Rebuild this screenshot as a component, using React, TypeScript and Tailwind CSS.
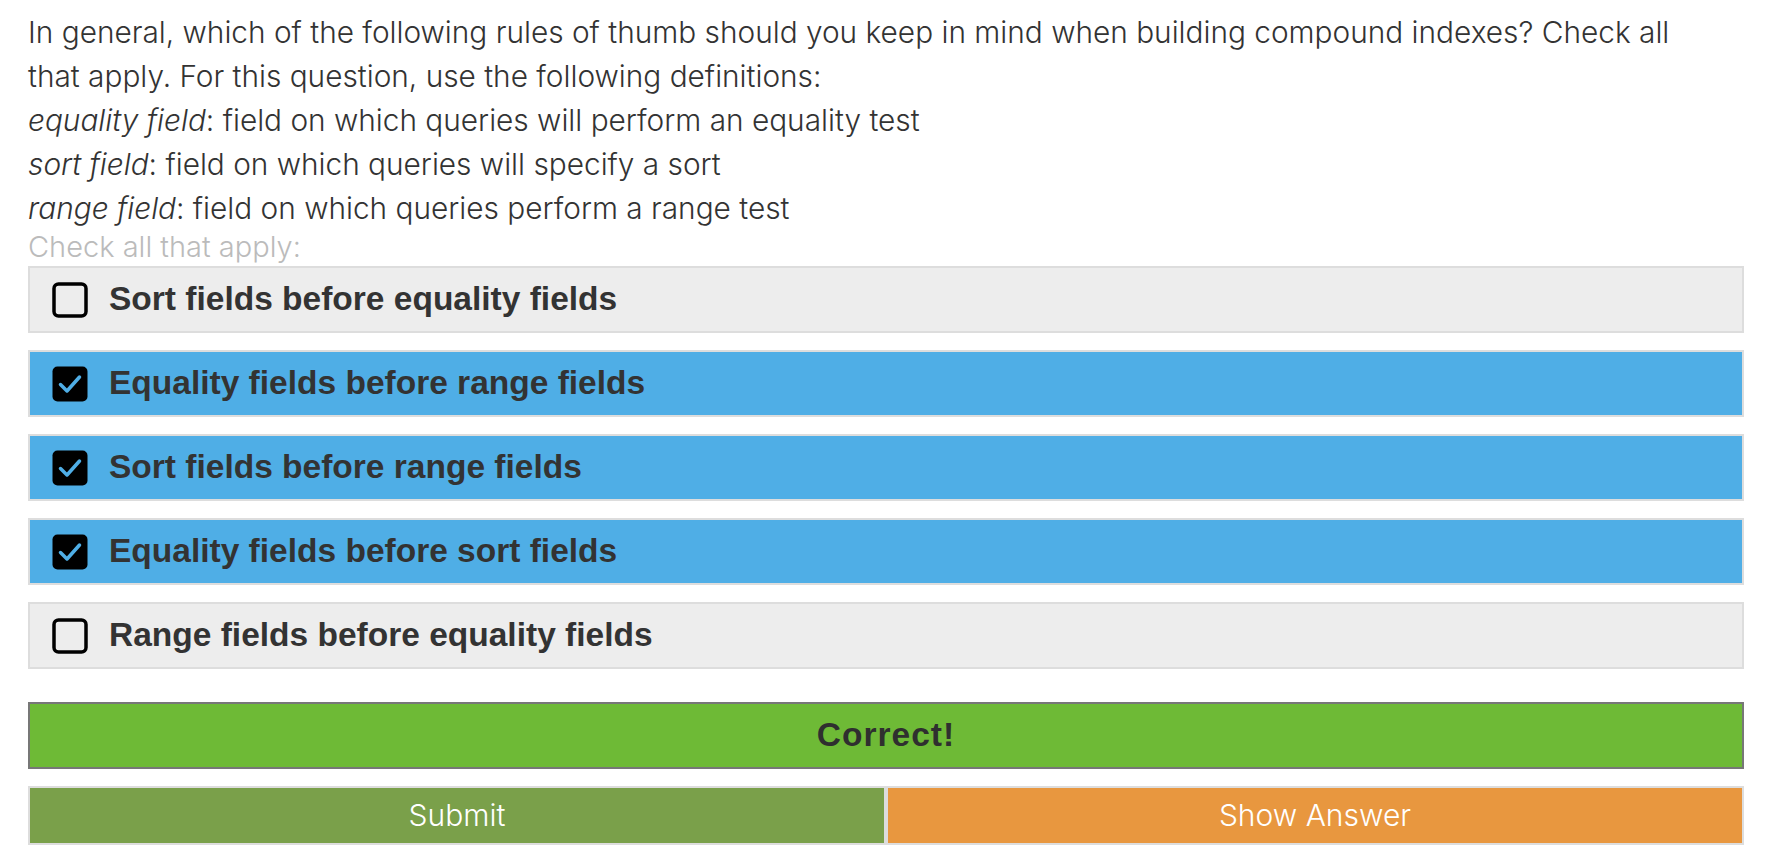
import React from "react";

const options = [
  { label: "Sort fields before equality fields", checked: false },
  { label: "Equality fields before range fields", checked: true },
  { label: "Sort fields before range fields", checked: true },
  { label: "Equality fields before sort fields", checked: true },
  { label: "Range fields before equality fields", checked: false },
];

function Box({ checked }: { checked: boolean }) {
  if (checked) {
    return (
      <svg width="36" height="36" viewBox="0 0 36 36" className="shrink-0">
        <rect x="0.5" y="0.5" width="35" height="35" rx="5" fill="#000" />
        <path d="M8.5 18.5 L15 25 L27.5 11" fill="none" stroke="#4faee6" strokeWidth="3.5" strokeLinecap="round" strokeLinejoin="round" />
      </svg>
    );
  }
  return (
    <svg width="36" height="36" viewBox="0 0 36 36" className="shrink-0">
      <rect x="2" y="2" width="32" height="32" rx="4.5" fill="none" stroke="#000" strokeWidth="3.5" />
    </svg>
  );
}

export default function App() {
  const light = { fontFamily: "Inter, 'Liberation Sans', sans-serif" };
  const bold = { fontFamily: "'Liberation Sans', Arial, sans-serif" };
  return (
    <div className="w-[1770px] h-[866px] bg-white pl-[28px] pr-[26px] pt-[10px]">
      <div className="text-[29.8px] leading-[44px] font-light text-[#333]" style={light}>
        <p>
          In general, which of the following rules of thumb should you keep in mind when building compound indexes? Check all
          <br />
          that apply. For this question, use the following definitions:
        </p>
        <p><em>equality field</em>: field on which queries will perform an equality test</p>
        <p><em>sort field</em>: field on which queries will specify a sort</p>
        <p><em>range field</em>: field on which queries perform a range test</p>
      </div>
      <div className="text-[29px] leading-[34px] font-light text-[#bbb]" style={light}>
        Check all that apply:
      </div>
      <div className="flex flex-col gap-[17px] mt-[2px]">
        {options.map((o) => (
          <div
            key={o.label}
            className={`h-[67px] border-2 border-[#dddddd] flex items-center pl-[22px] gap-[21px] ${o.checked ? "bg-[#4faee6]" : "bg-[#ededed]"}`}
          >
            <Box checked={o.checked} />
            <span className="text-[33.5px] font-bold text-[#333]" style={bold}>
              {o.label}
            </span>
          </div>
        ))}
      </div>
      <div className="mt-[33px] h-[67px] border-2 border-[#777] bg-[#6eba36] flex items-center justify-center">
        <span className="text-[33.5px] font-bold text-[#2f2f2f] tracking-[1px]" style={bold}>
          Correct!
        </span>
      </div>
      <div className="mt-[17px] flex h-[59px]">
        <div className="flex-1 border-2 border-[#dddddd] bg-[#7aa04a] flex items-center justify-center text-white text-[30px] font-light" style={light}>
          Submit
        </div>
        <div className="flex-1 border-2 border-[#dddddd] bg-[#e8973f] flex items-center justify-center text-white text-[30px] font-light" style={light}>
          Show Answer
        </div>
      </div>
    </div>
  );
}
